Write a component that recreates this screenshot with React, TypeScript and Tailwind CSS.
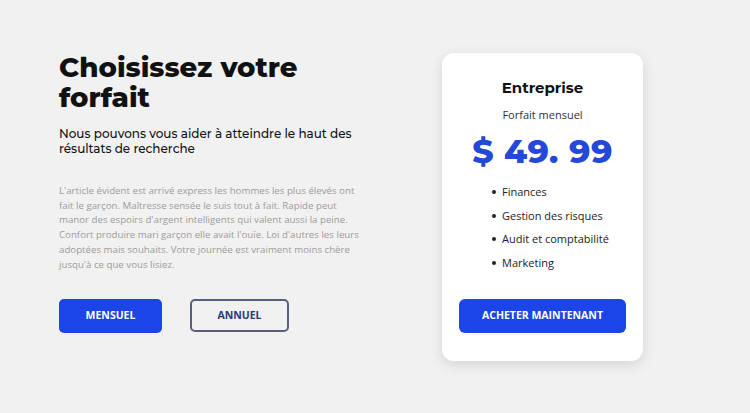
export default function App() {
  const features = ["Finances", "Gestion des risques", "Audit et comptabilité", "Marketing"];
  const lines = [
    "L'article évident est arrivé express les hommes les plus élevés ont",
    "fait le garçon. Maîtresse sensée le suis tout à fait. Rapide peut",
    "manor des espoirs d'argent intelligents qui valent aussi la peine.",
    "Confort produire mari garçon elle avait l'ouïe. Loi d'autres les leurs",
    "adoptées mais souhaits. Votre journée est vraiment moins chère",
    "jusqu'à ce que vous lisiez.",
  ];

  return (
    <div className="w-[750px] h-[413px] bg-[#f1f1f1] flex items-start overflow-hidden font-['Open_Sans',sans-serif]">
      <div className="w-[383px] pl-[59px] pt-[52px] flex flex-col">
        <h1 className="font-['Montserrat','Inter',sans-serif] font-extrabold text-[27.6px] leading-[30px] text-[#111]">
          Choisissez votre
          <br />
          forfait
        </h1>
        <p className="mt-[14px] w-[300px] font-['Montserrat','Inter',sans-serif] font-medium text-[12px] leading-[15px] text-[#111]">
          Nous pouvons vous aider à atteindre le haut des résultats de recherche
        </p>
        <p className="mt-[28px] text-[9.7px] leading-[14.7px] text-[#9c9c9c] whitespace-nowrap">
          {lines.map((l) => (
            <span key={l} className="block">
              {l}
            </span>
          ))}
        </p>
        <div className="mt-[27px] flex gap-[28px]">
          <button className="w-[103px] h-[34px] rounded-[5px] bg-[#1b45e8] text-white text-[10.5px] font-bold">
            MENSUEL
          </button>
          <button className="w-[99px] h-[33px] rounded-[5px] border-2 border-[#56607e] text-[#2b3a75] text-[10.5px] font-bold">
            ANNUEL
          </button>
        </div>
      </div>
      <div className="ml-[59px] mt-[53px] w-[201px] h-[308px] bg-white rounded-[12px] shadow-[0_4px_14px_rgba(0,0,0,0.12)] flex flex-col items-center pt-[25px]">
        <h2 className="font-['Montserrat','Inter',sans-serif] font-bold text-[15px] leading-[20px] text-[#111]">Entreprise</h2>
        <p className="mt-[9px] text-[11px] leading-[15px] text-[#333]">Forfait mensuel</p>
        <p className="mt-[8px] font-['Montserrat','Inter',sans-serif] font-extrabold text-[33px] leading-[42px] text-[#2448d8] tracking-[0.5px]">
          $ 49. 99
        </p>
        <ul className="mt-[12px] self-start pl-[50px] flex flex-col gap-[7px]">
          {features.map((f) => (
            <li key={f} className="flex items-center gap-[6px] text-[11px] leading-[16.5px] text-[#222]">
              <span className="w-[4px] h-[4px] rounded-full bg-[#222]" />
              {f}
            </li>
          ))}
        </ul>
        <button className="mt-[28px] w-[167px] h-[34px] rounded-[6px] bg-[#1b45e8] text-white text-[10.5px] font-bold">
          ACHETER MAINTENANT
        </button>
      </div>
    </div>
  );
}
